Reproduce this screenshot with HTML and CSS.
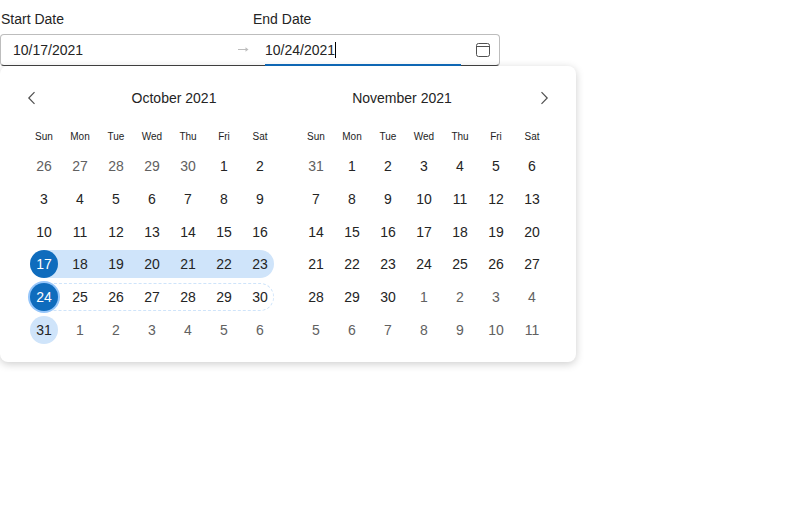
FILE: index.html
```
<!DOCTYPE html>
<html lang="en">
<head>
<meta charset="utf-8">
<title>Date range</title>
<link rel="stylesheet" href="styles.css">
</head>
<body>
<div class="labels"><label>Start Date</label><label>End Date</label></div>
<div class="field">
  <div class="value start">10/17/2021</div>
  <svg class="arrow" width="12" height="8" viewBox="0 0 12 8"><path d="M0 3.500h9"/><path class="tip" d="M7.500 1.300L10.500 3.500 7.500 5.700z"/></svg>
  <div class="value end">10/24/2021<span class="caret"></span></div>
  <svg class="icon" width="16" height="16" viewBox="0 0 16 16"><rect x="1.500" y="1.500" width="13" height="13" rx="2"/><path d="M1.500 4.500h13"/></svg>
</div>
<div class="popup">
  <section class="month october">
    <header><svg class="chev" width="16" height="16" viewBox="0 0 16 16"><path d="M10.500 2.200L4.800 8l5.700 5.800"/></svg><h2>October 2021</h2></header>
    <div class="grid" id="october"></div>
  </section>
  <section class="month november">
    <header><h2>November 2021</h2><svg class="chev next" width="16" height="16" viewBox="0 0 16 16"><path d="M5.500 2.200L11.200 8l-5.700 5.800"/></svg></header>
    <div class="grid" id="november"></div>
  </section>
</div>
<script src="script.js"></script>
</body>
</html>
```
FILE: styles.css
```
*, *::before { box-sizing: border-box; }
body { margin: 0; min-height: 510px; font: 14px/20px "Liberation Sans", Arial, sans-serif; color: #242424; background: #fff; }
svg { fill: none; stroke: #505050; display: block; }
.labels { display: grid; grid-template-columns: 252px 1fr; padding: 9px 0 5px 1px; }
.field { width: 500px; height: 32px; border: 1px solid #bdbdbd; border-bottom-color: #424242; border-radius: 4px; display: flex; align-items: center; padding: 0 8px 0 12px; }
.start { width: 225px; }
.arrow { stroke: #bdbdbd; flex: none; }
.arrow .tip { fill: #bdbdbd; stroke: none; }
.end { width: 196px; height: 32px; margin-left: 15px; padding-top: 2px; border-bottom: 2px solid #0f6cbd; display: flex; align-items: center; }
.caret { width: 1px; height: 16px; background: #000; }
.icon { margin-left: auto; }
.popup { width: 576px; height: 296px; border-radius: 8px; box-shadow: 0 2px 8px rgba(0,0,0,.2); background: #fff; display: flex; gap: 20px; padding: 16px 26px 0; position: relative; }
.month { width: 252px; }
header { height: 32px; position: relative; display: flex; justify-content: center; align-items: center; }
h2 { font: inherit; margin: 0; }
.october header { padding-left: 44px; }
.november header { padding-right: 44px; }
.chev { position: absolute; left: -2px; stroke-width: 1.200px; }
.next { left: auto; right: -2px; }
.grid { display: grid; grid-template-columns: repeat(7, 36px); grid-template-rows: 36px repeat(6, 32.700px); }
.weekday { font-size: 10px; text-align: center; line-height: 45px; }
.day { display: flex; align-items: center; justify-content: center; position: relative; }
.day span { width: 28px; height: 28px; border-radius: 50%; display: flex; align-items: center; justify-content: center; position: relative; }
.muted { color: #616161; }
.range::before { content: ""; position: absolute; left: 0; right: 0; top: 50%; height: 28px; margin-top: -14px; background: #cfe4fa; }
.range.first::before { left: 50%; }
.range.last::before { right: 4px; border-radius: 0 14px 14px 0; }
.hover-week::before { content: ""; position: absolute; left: 18px; width: 230px; top: 50%; height: 28px; margin-top: -14px; border: 1px dashed #cfe4fa; border-left: 0; border-radius: 0 14px 14px 0; }
.day.selected span { background: #0f6cbd; color: #fff; }
.day.focused span { box-shadow: 0 0 0 2px #96c6fa; }
.day.today span { background: #cfe4fa; }
```
FILE: script.js
```
const names = ["Sun", "Mon", "Tue", "Wed", "Thu", "Fri", "Sat"];
const states = { 17: "range first selected", 23: "range last", 24: "hover-week selected focused", 31: "today" };
function build(id, year, month) {
  const grid = document.getElementById(id);
  names.forEach(n => grid.insertAdjacentHTML("beforeend", `<div class="weekday">${n}</div>`));
  const offset = new Date(year, month, 1).getDay();
  for (let i = 0; i < 42; i++) {
    const d = new Date(year, month, 1 - offset + i);
    const day = d.getDate();
    let cls = "day";
    if (d.getMonth() !== month) cls += " muted";
    else if (month === 9) cls += " " + (states[day] || (day > 17 && day < 23 ? "range" : ""));
    grid.insertAdjacentHTML("beforeend", `<div class="${cls}"><span>${day}</span></div>`);
  }
}
build("october", 2021, 9);
build("november", 2021, 10);
```
